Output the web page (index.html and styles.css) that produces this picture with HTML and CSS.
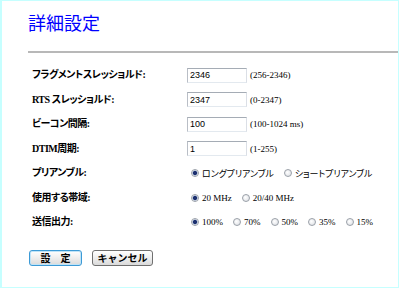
FILE: index.html
```html
<!DOCTYPE html>
<html lang="ja">
<head>
<meta charset="utf-8">
<link rel="stylesheet" href="styles.css">
</head>
<body>
<div class="page">
  <h1 class="title">詳細設定</h1>
  <div class="rule"></div>
  <div class="form">
    <div class="label">フラグメントスレッショルド:</div>
    <div class="field"><input class="text" type="text" value="2346"><span class="hint">(256-2346)</span></div>

    <div class="label">RTS スレッショルド:</div>
    <div class="field"><input class="text" type="text" value="2347"><span class="hint">(0-2347)</span></div>

    <div class="label">ビーコン間隔:</div>
    <div class="field"><input class="text" type="text" value="100"><span class="hint">(100-1024 ms)</span></div>

    <div class="label">DTIM周期:</div>
    <div class="field"><input class="text" type="text" value="1"><span class="hint">(1-255)</span></div>

    <div class="label">プリアンブル:</div>
    <div class="field radios">
      <label class="opt"><input class="radio" type="radio" name="pre" checked><span class="kana">ロングプリアンブル</span></label>
      <label class="opt"><input class="radio" type="radio" name="pre"><span class="kana">ショートプリアンブル</span></label>
    </div>

    <div class="label">使用する帯域:</div>
    <div class="field radios">
      <label class="opt"><input class="radio" type="radio" name="bw" checked><span>20 MHz</span></label>
      <label class="opt"><input class="radio" type="radio" name="bw"><span>20/40 MHz</span></label>
    </div>

    <div class="label">送信出力:</div>
    <div class="field radios">
      <label class="opt"><input class="radio" type="radio" name="pw" checked><span>100%</span></label>
      <label class="opt"><input class="radio" type="radio" name="pw"><span>70%</span></label>
      <label class="opt"><input class="radio" type="radio" name="pw"><span>50%</span></label>
      <label class="opt"><input class="radio" type="radio" name="pw"><span>35%</span></label>
      <label class="opt"><input class="radio" type="radio" name="pw"><span>15%</span></label>
    </div>
  </div>
  <div class="buttons">
    <button class="btn primary" type="button">設　定</button>
    <button class="btn cancel" type="button">キャンセル</button>
  </div>
</div>
</body>
</html>
```

FILE: styles.css
```css
html, body {
  margin: 0;
  padding: 0;
  background: #ffffff;
}

.page {
  width: 399px;
  height: 288px;
  box-sizing: border-box;
  border: 1px solid #c6ffff;
  border-left-width: 2px;
  font-family: "Liberation Serif", "Noto Sans CJK JP", serif;
  color: #000000;
  font-feature-settings: "palt";
}

.title {
  margin: 0;
  padding: 10px 0 0 26px;
  font-family: "Noto Sans CJK JP", sans-serif;
  font-size: 18px;
  line-height: 22px;
  font-weight: 400;
  color: #0000ff;
}

.rule {
  margin: 18px 0 0 26px;
  height: 2px;
  background: #b8b8b8;
}

.form {
  margin-top: 10px;
  padding-left: 30px;
  display: grid;
  grid-template-columns: 155px auto;
  grid-auto-rows: 24.5px;
  align-items: center;
}

.label {
  font-size: 10px;
  font-weight: bold;
  line-height: 12px;
  letter-spacing: -0.5px;
  white-space: nowrap;
}

.field {
  display: flex;
  align-items: center;
  font-size: 9px;
  white-space: nowrap;
}

.text {
  width: 60px;
  height: 15px;
  box-sizing: border-box;
  margin: 0;
  padding: 0 2px;
  border: 1px solid;
  border-color: #a5acb5 #dbdfe6 #e3e9ef #b9bec6;
  font-family: "Liberation Sans", sans-serif;
  font-size: 9px;
  color: #000000;
  background: #ffffff;
}

.hint {
  margin-left: 3px;
  font-size: 9px;
}

.radios {
  padding-left: 4px;
}

.opt {
  display: inline-flex;
  align-items: center;
  gap: 3px;
  margin-right: 10px;
  font-size: 9px;
}

.kana {
  font-size: 9px;
  letter-spacing: -0.1px;
}

.radio {
  appearance: none;
  -webkit-appearance: none;
  margin: 0;
  width: 8px;
  height: 8px;
  box-sizing: border-box;
  border: 1px solid #9aa0a8;
  border-radius: 50%;
  background: radial-gradient(circle at 40% 40%, #ffffff 0%, #e4e6ea 70%, #cfd3d8 100%);
}

.radio:checked {
  background: radial-gradient(circle, #1c2f6e 0 1.6px, #7f94c0 2.2px, #eef0f4 2.8px);
}

.buttons {
  margin: 15px 0 0 27px;
  display: flex;
  gap: 10px;
}

.btn {
  height: 16px;
  box-sizing: border-box;
  margin: 0;
  padding: 0;
  border: 1px solid #707070;
  border-radius: 3px;
  background: linear-gradient(#ffffff 0%, #f0f0f0 45%, #dadada 100%);
  font-family: "Noto Sans CJK JP", sans-serif;
  font-size: 10px;
  font-weight: bold;
  line-height: 13px;
  color: #000000;
}

.primary {
  width: 53px;
  border-color: #3c9ad6;
  box-shadow: inset 0 0 0 1px #bfe3f7;
}

.cancel {
  width: 61px;
}
```
